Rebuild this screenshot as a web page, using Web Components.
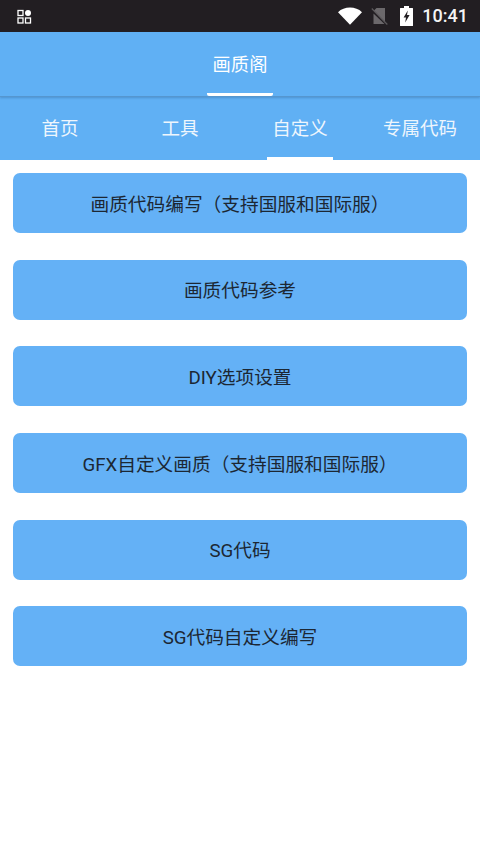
<!DOCTYPE html>
<html lang="zh">
<head>
<meta charset="utf-8">
<title>画质阁</title>
<style>
  html, body { margin: 0; padding: 0; background: #fff; }
  body { font-family: Roboto, "Noto Sans CJK SC", sans-serif; width: 480px; height: 853px; overflow: hidden; }
</style>
</head>
<body>
<app-shell>
  <status-bar></status-bar>
  <app-header>画质阁</app-header>
  <tab-strip active="2">
    <tab-item>首页</tab-item>
    <tab-item>工具</tab-item>
    <tab-item>自定义</tab-item>
    <tab-item>专属代码</tab-item>
  </tab-strip>
  <action-list>
    <action-button>画质代码编写（支持国服和国际服）</action-button>
    <action-button>画质代码参考</action-button>
    <action-button>DIY选项设置</action-button>
    <action-button>GFX自定义画质（支持国服和国际服）</action-button>
    <action-button>SG代码</action-button>
    <action-button>SG代码自定义编写</action-button>
  </action-list>
</app-shell>

<script>
function define(name, css, html, setup) {
  customElements.define(name, class extends HTMLElement {
    constructor() {
      super();
      this.attachShadow({ mode: 'open' });
      this.shadowRoot.innerHTML = `<style>${css}</style>${html}`;
    }
    connectedCallback() {
      if (setup) setup(this);
    }
  });
}

define('app-shell', `
  :host { display: flex; flex-direction: column; width: 480px; height: 853px; }
`, `<slot></slot>`);

define('status-bar', `
  :host {
    display: flex; align-items: center; height: 32px; flex: none;
    background: #221e22; color: #f4f4f4; padding: 0 12px 0 17px; box-sizing: border-box;
    font: 500 18px Roboto, sans-serif;
  }
  .spacer { flex: 1; }
  svg { display: block; }
  .wifi { margin-right: 9px; }
  .sim { margin-right: 12px; }
  .batt { margin-right: 9px; }
  .time { line-height: 32px; }
`, `
  <svg width="15" height="15" viewBox="0 0 15 15" fill="none">
    <rect x="1" y="1.5" width="5" height="5" stroke="#fff" stroke-width="1.3"/>
    <circle cx="11" cy="4" r="3" fill="#fff"/>
    <rect x="1" y="9" width="5" height="5" stroke="#fff" stroke-width="1.3"/>
    <rect x="8.5" y="9" width="5" height="5" stroke="#fff" stroke-width="1.3"/>
  </svg>
  <span class="spacer"></span>
  <svg class="wifi" width="24" height="18" viewBox="0 0 24 18"><path d="M0 5.2C3.2 2.2 7.4.6 12 .6s8.800 1.600 12 4.600L12 17.800z" fill="#fff"/></svg>
  <svg class="sim" width="17" height="18" viewBox="0 0 17 18">
    <path d="M5.500 1H14v14.500L2.800 3.800z" fill="#6b686b"/>
    <path d="M2.500 6.500V17H13.500z" fill="#6b686b"/>
    <path d="M.8 1.500 16.300 17.500" stroke="#5c595c" stroke-width="1.200"/>
  </svg>
  <svg class="batt" width="13" height="20" viewBox="0 0 13 20">
    <path d="M4 0h5v2h3.500a.5.5 0 0 1 .5.500V19.500a.5.5 0 0 1-.5.500H.5a.5.5 0 0 1-.5-.5V2.500A.5.5 0 0 1 .5 2H4z" fill="#fff"/>
    <path d="M7.800 4.500 3.600 11.500H6L5.200 16.500 9.600 9H7z" fill="#221e22"/>
  </svg>
  <span class="time">10:41</span>
`);

define('app-header', `
  :host {
    display: flex; justify-content: center; height: 65px; flex: none; box-sizing: border-box;
    background: #60b0f4; color: #fff; font: 18.300px "Noto Sans CJK SC", sans-serif;
    border-bottom: 1px solid #5596cf;
    box-shadow: 0 1px 2px rgba(40, 90, 140, .35);
    position: relative; z-index: 1;
  }
  .title {
    display: flex; align-items: center; justify-content: center; width: 66px;
    border-bottom: 3px solid #fff; border-radius: 0 0 2px 2px; padding-top: 1px;
    box-sizing: border-box; height: 64px;
  }
`, `<div class="title"><slot></slot></div>`);

define('tab-strip', `
  :host {
    display: grid; grid-template-columns: repeat(4, 1fr); height: 63px; flex: none;
    background: #60b0f4;
  }
`, `<slot></slot>`, el => {
  const active = +el.getAttribute('active');
  [...el.children].forEach((tab, i) => tab.toggleAttribute('selected', i === active));
});

define('tab-item', `
  :host {
    display: flex; justify-content: center; color: #eef6fd;
    font: 18.500px "Noto Sans CJK SC", sans-serif;
  }
  .label {
    display: flex; align-items: center; justify-content: center;
    width: 66px; white-space: nowrap; box-sizing: border-box;
    border-bottom: 3px solid transparent; padding-bottom: 1px;
  }
  :host([selected]) .label { border-bottom-color: #fff; border-radius: 3px 3px 0 0; }
`, `<div class="label"><slot></slot></div>`);

define('action-list', `
  :host {
    display: flex; flex-direction: column; gap: 26.6px;
    padding: 13.300px 13px 0;
  }
`, `<slot></slot>`);

define('action-button', `
  :host {
    display: flex; align-items: center; justify-content: center;
    height: 60px; border-radius: 7px; background: #64b1f6;
    color: #1c2733; font: 18.700px Roboto, "Noto Sans CJK SC", sans-serif;
    white-space: nowrap; padding-bottom: 2px; box-sizing: border-box;
  }
`, `<slot></slot>`);
</script>
</body>
</html>
